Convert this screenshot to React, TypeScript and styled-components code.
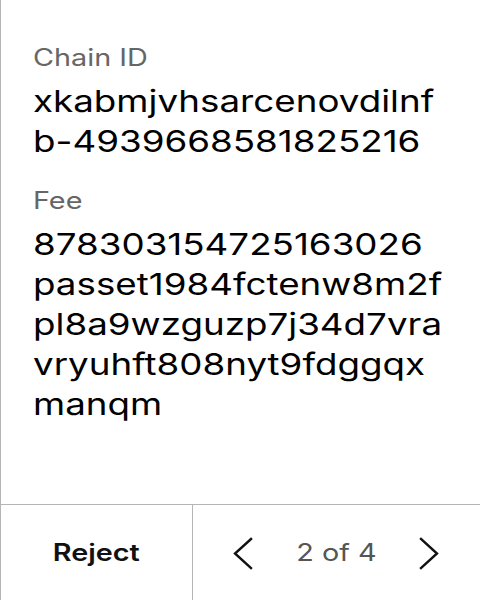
import styled, { createGlobalStyle } from 'styled-components';

// the reference draws its text stretched wide, so text parts get an x-scale
const STRETCH = 1.2;
const VALUE_STRETCH = 1.225;

const GlobalStyle = createGlobalStyle`
    html, body {
        margin: 0;
        padding: 0;
        background: #ffffff;
    }

    body {
        font-family: 'Inter', 'Noto Sans', sans-serif;
        -webkit-font-smoothing: antialiased;
    }
`;

const fields = [
    { label: 'Chain ID', value: 'xkabmjvhsarcenovdilnfb-4939668581825216' },
    {
        label: 'Fee',
        value: '878303154725163026passet1984fctenw8m2fpl8a9wzguzp7j34d7vravryuhft808nyt9fdggqxmanqm',
    },
];

const Chevron = ({ dir }: { dir: 'left' | 'right' }) => (
    <svg width="20" height="36" viewBox="0 0 20 36" fill="none">
        <polyline
            points={dir === 'left' ? '18,4 2,18.5 18,33' : '2,4 18,18.5 2,33'}
            stroke="#111"
            strokeWidth="2.4"
            strokeLinecap="square"
        />
    </svg>
);

const App = () => {
    return (
        <>
            <GlobalStyle />
            <StyledScreen>
                <StyledContent>
                    {fields.map((field) => (
                        <StyledField key={field.label}>
                            <StyledLabel>{field.label}</StyledLabel>
                            <StyledValue>{field.value}</StyledValue>
                        </StyledField>
                    ))}
                </StyledContent>
                <StyledFooter>
                    <StyledRejectButton type="button">
                        <StyledStretched>Reject</StyledStretched>
                    </StyledRejectButton>
                    <StyledPager>
                        <StyledArrowButton type="button" aria-label="Previous">
                            <Chevron dir="left" />
                        </StyledArrowButton>
                        <StyledPageCount>2 of 4</StyledPageCount>
                        <StyledArrowButton type="button" aria-label="Next">
                            <Chevron dir="right" />
                        </StyledArrowButton>
                    </StyledPager>
                </StyledFooter>
            </StyledScreen>
        </>
    );
};

const StyledScreen = styled.div`
    display: flex;
    flex-direction: column;
    height: 600px;
    border-left: 1px solid #b5b5b5;
    box-sizing: border-box;
`;

const StyledContent = styled.main`
    flex: 1;
    display: flex;
    flex-direction: column;
    gap: 25px;
    padding: 43px 32px 0 32px;
`;

const StyledField = styled.section`
    display: flex;
    flex-direction: column;
    gap: 8px;
`;

const StyledLabel = styled.div`
    width: calc(100% / ${STRETCH});
    font-size: 24px;
    line-height: 30px;
    color: #666666;
    transform: scaleX(${STRETCH});
    transform-origin: 0 0;
`;

const StyledValue = styled.div`
    width: 335px;
    font-size: 30px;
    line-height: 40px;
    color: #000000;
    word-break: break-all;
    transform: scaleX(${VALUE_STRETCH});
    transform-origin: 0 0;
`;

const StyledFooter = styled.footer`
    display: grid;
    grid-template-columns: 191px 1fr;
    height: 96px;
    border-top: 1px solid #b5b5b5;
    box-sizing: border-box;
`;

const StyledStretched = styled.span`
    display: inline-block;
    transform: scaleX(${STRETCH});
`;

const StyledRejectButton = styled.button`
    border: none;
    background: none;
    padding: 0;
    font-family: 'Inter', sans-serif;
    font-size: 24px;
    font-weight: 600;
    color: #111111;
    cursor: pointer;
`;

const StyledPager = styled.div`
    display: flex;
    align-items: center;
    justify-content: space-between;
    padding: 0 41px 0 40px;
    border-left: 1px solid #b5b5b5;
`;

const StyledArrowButton = styled.button`
    display: flex;
    border: none;
    background: none;
    padding: 0;
    cursor: pointer;
`;

const StyledPageCount = styled(StyledStretched)`
    font-size: 24px;
    color: #555555;
`;

export default App;
